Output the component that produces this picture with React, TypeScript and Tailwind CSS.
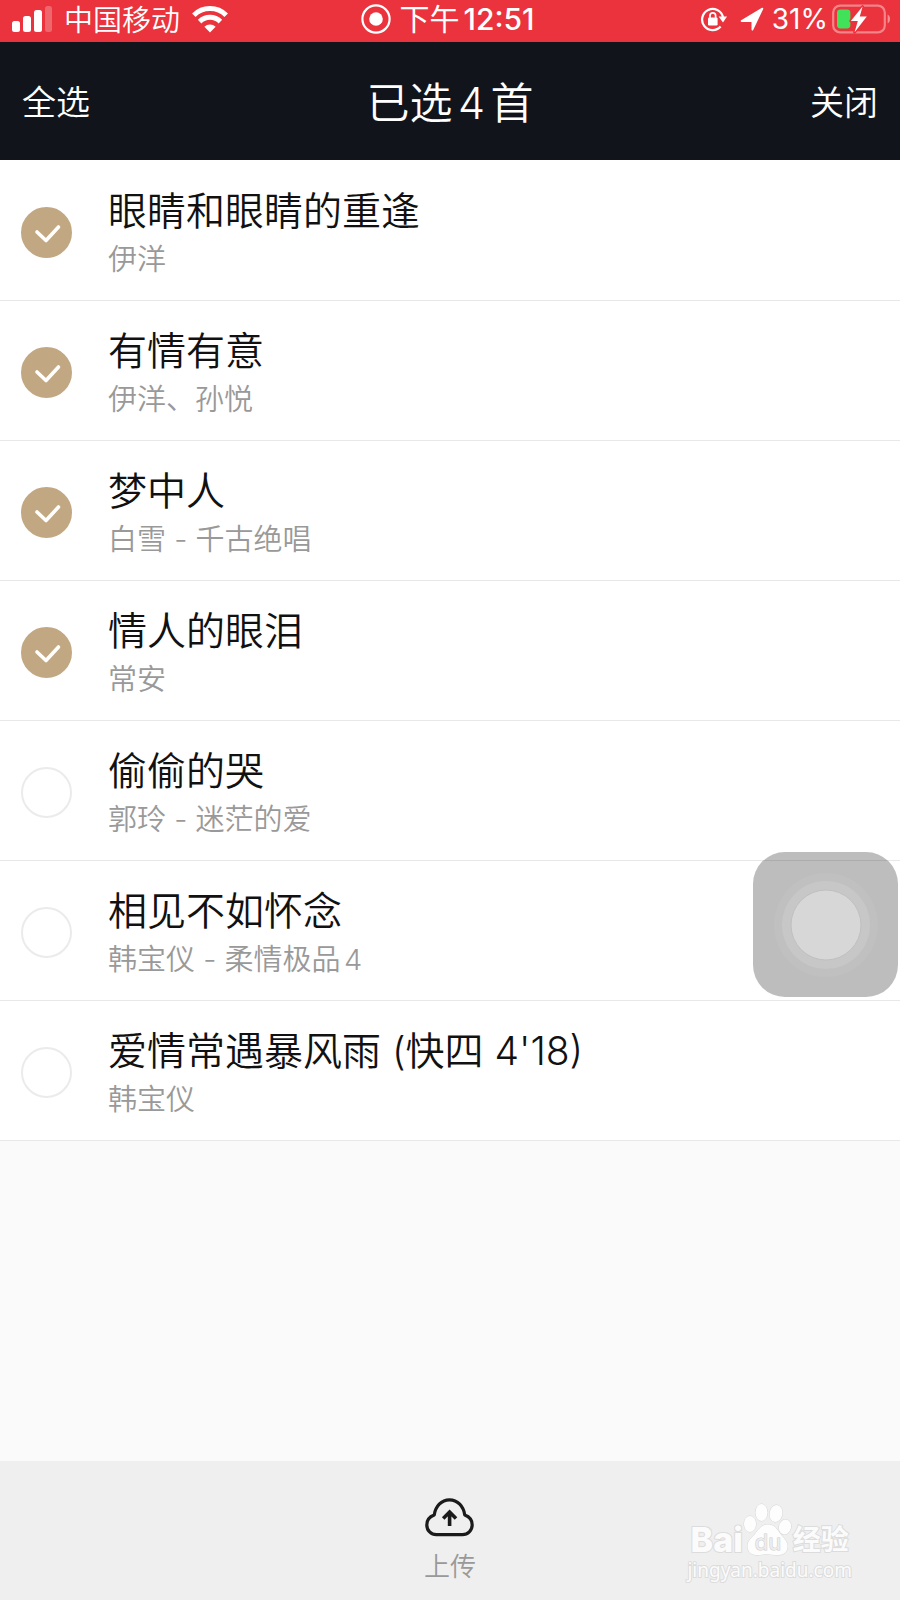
import { useState } from "react";

type Song = { title: string; detail: string };

const songs: Song[] = [
  { title: "眼睛和眼睛的重逢", detail: "伊洋" },
  { title: "有情有意", detail: "伊洋、孙悦" },
  { title: "梦中人", detail: "白雪 - 千古绝唱" },
  { title: "情人的眼泪", detail: "常安" },
  { title: "偷偷的哭", detail: "郭玲 - 迷茫的爱" },
  { title: "相见不如怀念", detail: "韩宝仪 - 柔情极品4" },
  { title: "爱情常遇暴风雨 (快四 4'18)", detail: "韩宝仪" },
];

function SignalIcon() {
  return (
    <svg width="40" height="28" viewBox="0 0 40 28" fill="#fff" aria-hidden="true">
      <rect x="0" y="16" width="8" height="11" rx="2.5" />
      <rect x="11" y="11" width="8" height="16" rx="2.5" />
      <rect x="22" y="5" width="8" height="22" rx="2.5" />
      <rect x="33" y="1" width="7" height="26" rx="2.5" opacity="0.25" />
    </svg>
  );
}

function WifiIcon() {
  return (
    <svg width="36" height="28" viewBox="0 0 36 28" aria-hidden="true">
      <g fill="none" stroke="#fff" strokeWidth="5">
        <path d="M1.8 10.2a23 23 0 0 1 32.4 0" />
        <path d="M7.6 16.6a14.8 14.8 0 0 1 20.8 0" />
      </g>
      <path d="M18 27.500l-5.6-5.8a8 8 0 0 1 11.2 0z" fill="#fff" />
    </svg>
  );
}

function RecordIcon() {
  return (
    <svg width="30" height="30" viewBox="0 0 30 30" aria-hidden="true">
      <circle cx="15" cy="15" r="13.6" fill="none" stroke="#fff" strokeWidth="2.2" />
      <circle cx="15" cy="15" r="6.8" fill="#fff" />
    </svg>
  );
}

function RotationLockIcon() {
  return (
    <svg width="28" height="26" viewBox="0 0 28 26" aria-hidden="true">
      <path d="M20.6 20.6A10.6 10.6 0 1 1 23 11" fill="none" stroke="#fff" strokeWidth="2.3" />
      <path d="M18.6 10.4h8.4l-4 6z" fill="#fff" />
      <rect x="8" y="11.6" width="9.6" height="7.8" rx="1.2" fill="#fff" />
      <path d="M10 12V9.6a2.8 2.8 0 0 1 5.6 0V12" fill="none" stroke="#fff" strokeWidth="1.7" />
    </svg>
  );
}

function LocationIcon() {
  return (
    <svg width="24" height="24" viewBox="0 0 24 24" aria-hidden="true">
      <path d="M22.400 1.600L12.400 22.600V14H1.600z" fill="#fff" stroke="#fff" strokeWidth="1.800" strokeLinejoin="round" />
    </svg>
  );
}

function BatteryIcon() {
  return (
    <svg width="60" height="30" viewBox="0 0 60 30" aria-hidden="true">
      <rect x="1.2" y="1.6" width="51.6" height="26.8" rx="7" fill="none" stroke="#fff" strokeOpacity="0.4" strokeWidth="2.2" />
      <path d="M55.6 10.5c3.2 1.2 3.2 7.800 0 9z" fill="#fff" opacity="0.45" />
      <rect x="5" y="5.6" width="13.4" height="18.8" rx="3.4" fill="#41e25a" />
      <path
        d="M30.6 2.600L18.800 17h7l-3.200 11.200L34.800 12.600h-7z"
        fill="#fff"
        stroke="#ea333c"
        strokeWidth="3"
        strokeLinejoin="round"
        paintOrder="stroke"
      />
    </svg>
  );
}

function CloudUploadIcon() {
  return (
    <svg width="50" height="40" viewBox="0 0 50 40" fill="none" stroke="#1b1b1b" strokeWidth="3.2" aria-hidden="true">
      <path
        d="M11.500 37.600h26a9.700 9.700 0 0 0 9.700-9.600c0-5-3-8.300-7.400-9.900C38.600 9.500 32.600 2.800 24.500 2.800S10.400 9.500 9.200 18.100C4.800 19.700 1.800 23 1.800 28a9.500 9.500 0 0 0 9.700 9.600z"
        strokeLinejoin="round"
      />
      <path d="M24.600 29V15.500M18.200 21.400l6.400-6.400 6.400 6.400" strokeWidth="3.600" />
    </svg>
  );
}

function Paw() {
  return (
    <svg width="50" height="56" viewBox="0 0 50 56" fill="#fdfdfd" stroke="#d6d6d6" strokeWidth="1" aria-hidden="true">
      <ellipse cx="7" cy="22" rx="6" ry="8" />
      <ellipse cx="18.500" cy="10.500" rx="6" ry="8.500" />
      <ellipse cx="33" cy="11.500" rx="6.400" ry="8.500" transform="rotate(10 33 11.500)" />
      <ellipse cx="42" cy="25" rx="6" ry="7.600" transform="rotate(14 42 25)" />
      <path d="M25 22.500c-7 0-9.500 5.500-13 9.500-3.500 4-8 7-7.500 13 .6 6 5.500 8.500 10.500 8s7-.8 10-.8 6 1 11 .8c5.500-.2 9-4 8.500-9.500-.5-5-4-7.500-7-11.500-3.500-4.500-6-9.500-12.500-9.500z" />
      <text x="25" y="48" textAnchor="middle" fontFamily="Inter, sans-serif" fontSize="22" fill="#ededed" stroke="#cccccc">
        du
      </text>
    </svg>
  );
}

function Watermark() {
  return (
    <div className="absolute right-12 bottom-[18px] flex flex-col items-center text-[#fbfbfb] [paint-order:stroke] [-webkit-text-stroke:2px_#dcdcdc]">
      <div className="flex items-end">
        <span className="text-[34px] leading-9 font-extrabold">Bai</span>
        <Paw />
        <span className="text-[28px] leading-9 font-bold">经验</span>
      </div>
      <span className="font-['Noto_Sans',sans-serif] text-[19px] leading-6">jingyan.baidu.com</span>
    </div>
  );
}

function SongRow({ song, checked, onToggle }: { song: Song; checked: boolean; onToggle: () => void }) {
  return (
    <li className="border-b border-[#e8e8e8] bg-white">
      <label className="flex h-[139px] items-center gap-9 px-[21px] pt-1">
        <span className="grid shrink-0">
          <input
            type="checkbox"
            checked={checked}
            onChange={onToggle}
            className="col-start-1 row-start-1 size-[51px] appearance-none rounded-full border-2 border-[#ebebeb] bg-white checked:border-[#c2a882] checked:bg-[#c2a882]"
          />
          {checked && (
            <svg
              viewBox="0 0 51 51"
              className="pointer-events-none col-start-1 row-start-1 size-[51px]"
              fill="none"
              stroke="#fff"
              strokeWidth="3.600"
              strokeLinecap="round"
              strokeLinejoin="round"
              aria-hidden="true"
            >
              <path d="M16 25l9 8.500 12.500-13.500" />
            </svg>
          )}
        </span>
        <span className="flex min-w-0 flex-col pt-1">
          <span className="text-[39px] leading-[50px] font-[350] text-[#111]">{song.title}</span>
          <span className="text-[29px] leading-[48px] font-[350] text-[#999]">{song.detail}</span>
        </span>
      </label>
    </li>
  );
}

export default function App() {
  const [selected, setSelected] = useState<boolean[]>(songs.map((_, i) => i < 4));
  const count = selected.filter(Boolean).length;

  return (
    <div className="relative flex min-h-screen flex-col bg-[#fafafa] font-['Inter','Noto_Sans_CJK_SC',sans-serif] [text-autospace:normal]">
      <div className="grid h-[42px] grid-cols-[1fr_auto_1fr] items-center bg-[#ea333c] pr-2 pb-1 pl-3 text-white">
        <div className="flex items-center gap-3">
          <SignalIcon />
          <span className="pt-1 text-[29px] leading-8 font-[350]">中国移动</span>
          <WifiIcon />
        </div>
        <div className="flex items-center gap-2 pr-2">
          <RecordIcon />
          <span className="flex items-center gap-1 text-[30px] leading-8">
            <span>下午</span>
            <span className="font-medium">12:51</span>
          </span>
        </div>
        <div className="flex items-center justify-end">
          <RotationLockIcon />
          <span className="mr-2 ml-3 flex">
            <LocationIcon />
          </span>
          <span className="mr-1 text-[28px] leading-8">31%</span>
          <BatteryIcon />
        </div>
      </div>

      <header className="grid h-[118px] grid-cols-[1fr_auto_1fr] items-center bg-[#11151b] px-[22px] pt-1 text-white">
        <button
          type="button"
          className="justify-self-start text-[34px] leading-10 font-[350]"
          onClick={() => setSelected(songs.map(() => true))}
        >
          全选
        </button>
        <h1 className="text-[43px] leading-[50px] font-[350]">已选{count}首</h1>
        <button type="button" className="justify-self-end text-[34px] leading-10 font-[350]">
          关闭
        </button>
      </header>

      <main className="flex-1">
        <ul className="bg-white pt-px">
          {songs.map((song, i) => (
            <SongRow
              key={song.title}
              song={song}
              checked={selected[i]}
              onToggle={() => setSelected(selected.map((v, j) => (j === i ? !v : v)))}
            />
          ))}
        </ul>
      </main>

      <footer className="relative flex h-[139px] justify-center bg-[#efefef] pt-9">
        <button type="button" className="flex flex-col items-center gap-[10px] self-start">
          <CloudUploadIcon />
          <span className="text-[26px] leading-10 font-[350] text-[#999]">上传</span>
        </button>
        <Watermark />
      </footer>

      <button
        type="button"
        aria-label="辅助触控"
        className="absolute top-[852px] right-[2px] grid size-[145px] place-items-center rounded-[32px] bg-black/26"
      >
        <svg width="108" height="108" viewBox="0 0 108 108" aria-hidden="true">
          <circle cx="54" cy="54" r="52" fill="#c0c0c0" />
          <circle cx="54" cy="54" r="44" fill="#c7c7c7" />
          <circle cx="54" cy="54" r="35" fill="#d7d7d7" stroke="#c0c0c0" strokeWidth="1" />
        </svg>
      </button>
    </div>
  );
}
